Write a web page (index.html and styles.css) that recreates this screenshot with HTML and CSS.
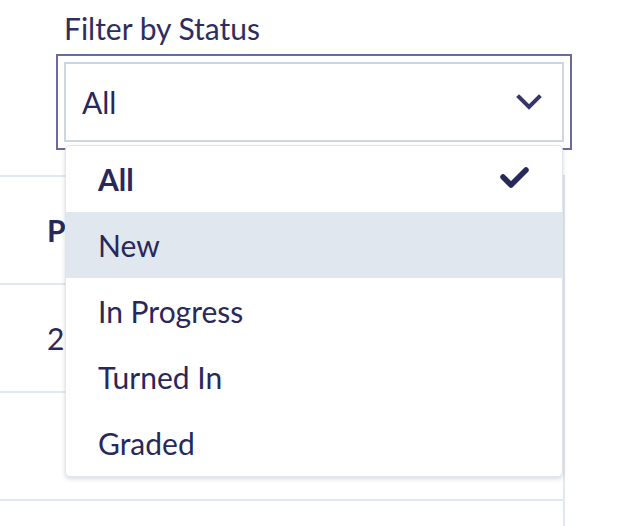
FILE: index.html
```html
<!DOCTYPE html>
<html lang="en">
<head>
    <meta charset="UTF-8">
    <title>Filter by Status</title>
    <link rel="stylesheet" href="styles.css">
</head>
<body>

    <div class="filter">
        <label class="filter-label" for="status">Filter by Status</label>
        <div class="select-wrap">
            <div class="select" id="status">
                <span>All</span>
                <svg class="chevron" width="26" height="16" viewBox="0 0 26 16">
                    <polyline points="3,3 13,13 23,3" fill="none" stroke="#36366a" stroke-width="4" stroke-linecap="square"/>
                </svg>
            </div>

            <!-- open menu -->
            <ul class="menu">
                <li class="selected">All
                    <svg class="check" width="32" height="26" viewBox="0 0 32 26">
                        <polyline points="5,11 13,19 28,4" fill="none" stroke="#28285a" stroke-width="5.5" stroke-linecap="round" stroke-linejoin="round"/>
                    </svg>
                </li>
                <li class="hover">New</li>
                <li>In Progress</li>
                <li>Turned In</li>
                <li>Graded</li>
            </ul>
        </div>
    </div>

    <table class="list">
        <tr><th>Points</th></tr>
        <tr><td>25</td></tr>
        <tr><td></td></tr>
        <tr><td></td></tr>
    </table>

</body>
</html>
```

FILE: styles.css
```css
body {
    margin: 0;
    font-family: Lato, "Noto Sans", sans-serif;
    color: #28285a;
    background: #fff;
    overflow: hidden;
}

.filter {
    padding: 10px 0 0 64px;
    width: 500px;
}

.filter-label {
    display: block;
    font-size: 30px;
    line-height: 36px;
    margin-bottom: 16px;
    color: #2e2e5e;
}

.select-wrap {
    position: relative;
}

.select {
    height: 80px;
    box-sizing: border-box;
    border: 2px solid #cdd6e1;
    outline: 2px solid #6b6a9e;
    outline-offset: 6px;
    display: flex;
    align-items: center;
    justify-content: space-between;
    padding: 0 20px 0 16px;
    font-size: 30px;
}

.menu {
    position: absolute;
    top: 83px;
    left: 1px;
    width: 498px;
    margin: 0;
    padding: 0;
    list-style: none;
    background: #fff;
    border: 1px solid #e1e5ec;
    border-radius: 5px;
    box-shadow: 0 2px 4px rgba(40, 50, 80, 0.18);
    box-sizing: border-box;
    overflow: hidden;
    z-index: 2;
}

.menu li {
    height: 66px;
    display: flex;
    align-items: center;
    justify-content: space-between;
    padding: 0 32px 0 32px;
    font-size: 30px;
}

.menu li.selected {
    font-weight: 700;
}

.menu li.hover {
    background: #e1e7ef;
}

.list {
    margin-top: 33px;
    width: 565px;
    border-collapse: collapse;
    border-right: 2px solid #e2e8f0;
}

.list th,
.list td {
    height: 106px;
    border-top: 2px solid #e2e8f0;
    padding: 0 0 0 47px;
    text-align: left;
    font-size: 30px;
}

.list th {
    font-weight: 700;
}
```
